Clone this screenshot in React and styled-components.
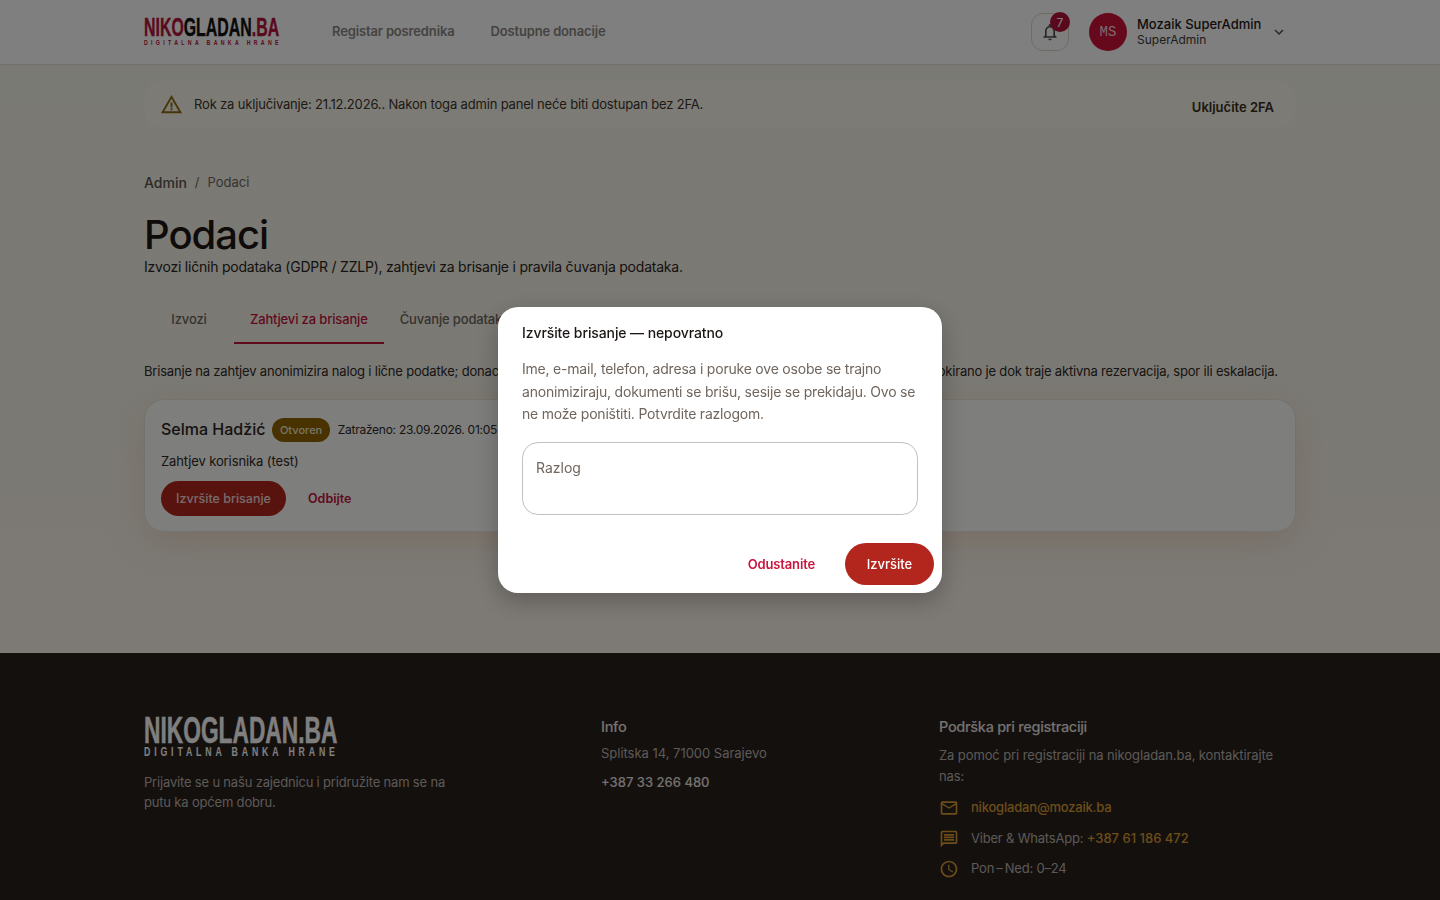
import React from "react";
import styled, { createGlobalStyle } from "styled-components";
import {
  MdOutlineNotifications,
  MdKeyboardArrowDown,
  MdWarningAmber,
  MdOutlineEmail,
  MdOutlineMessage,
  MdAccessTime,
} from "react-icons/md";

const BODY_FONT = `"Inter", "Liberation Sans", sans-serif`;

const GlobalStyle = createGlobalStyle`
  html, body {
    margin: 0;
    padding: 0;
    overflow: hidden;
    height: 900px;
  }
  * { box-sizing: border-box; }
  body {
    font-family: ${BODY_FONT};
    background: #f5f4ea;
    color: #1f1a17;
  }
`;

const Page = styled.div`
  width: 1440px;
  height: 900px;
  overflow: hidden;
  background: linear-gradient(180deg, #f5f4e8 0%, #f6f3e9 45%, #fbf4ec 72%);
`;

const Container = styled.div`
  width: 1152px;
  margin: 0 auto;
`;

const Header = styled.header`
  height: 65px;
  background: #fff;
  border-bottom: 1px solid #e9e2d4;
`;

const HeaderRow = styled(Container)`
  height: 64px;
  display: flex;
  align-items: center;
`;

const LogoBox = styled.div`
  flex: none;
  width: ${(p) => p.$width}px;
  height: ${(p) => p.$height}px;
  line-height: 1;
`;

const LogoMain = styled.div`
  display: block;
  white-space: nowrap;
  font-family: "Liberation Sans Narrow", "Liberation Sans", sans-serif;
  font-weight: 700;
  font-size: ${(p) => p.$size}px;
  line-height: ${(p) => p.$size * 0.8}px;
  -webkit-text-stroke-width: 0.4px;
  transform: scaleX(${(p) => p.$scale});
  transform-origin: left top;
  color: ${(p) => p.$color};
`;

const LogoSub = styled.div`
  margin-top: ${(p) => p.$gap || 0}px;
  white-space: nowrap;
  font-family: "Liberation Sans", sans-serif;
  font-weight: 700;
  font-size: ${(p) => p.$size}px;
  letter-spacing: ${(p) => p.$spacing}px;
  line-height: ${(p) => p.$size + 1}px;
  transform: scaleX(0.7);
  transform-origin: left top;
  color: ${(p) => p.$color};
`;

const Red = styled.span`
  color: #b5123a;
`;

const Nav = styled.nav`
  display: flex;
  gap: 36px;
  margin-left: 53px;
  margin-top: -2px;
`;

const NavLink = styled.a`
  font-size: 13px;
  font-weight: 600;
  letter-spacing: -0.15px;
  color: #8a8683;
`;

const HeaderRight = styled.div`
  margin-left: auto;
  display: flex;
  align-items: center;
`;

const BellButton = styled.div`
  position: relative;
  width: 38px;
  height: 38px;
  border: 1px solid #ddd6c9;
  border-radius: 12px;
  display: flex;
  align-items: center;
  justify-content: center;
  color: #55504c;
  font-size: 20px;
`;

const BellBadge = styled.span`
  position: absolute;
  top: -2px;
  right: -2px;
  width: 20px;
  height: 20px;
  border-radius: 50%;
  background: #b5123a;
  color: #fff;
  font-size: 12px;
  display: flex;
  align-items: center;
  justify-content: center;
`;

const Avatar = styled.div`
  width: 38px;
  height: 38px;
  border-radius: 50%;
  margin-left: 20px;
  background: #cf1238;
  color: #f2d9dd;
  font-family: "Liberation Mono", monospace;
  font-size: 14px;
  display: flex;
  align-items: center;
  justify-content: center;
`;

const UserText = styled.div`
  margin-left: 10px;
  margin-top: -2px;
  width: 133px;
`;

const UserName = styled.div`
  font-size: 13px;
  font-weight: 500;
  line-height: 16px;
  color: #1f1a17;
`;

const UserRole = styled.div`
  font-size: 12px;
  line-height: 15px;
  color: #3c3734;
`;

const Chevron = styled.div`
  display: flex;
  font-size: 18px;
  color: #55504c;
  margin-right: 8px;
`;

const Banner = styled.div`
  height: 48px;
  margin-top: 15px;
  padding: 0 22px 0 16px;
  display: flex;
  align-items: center;
  border-radius: 20px;
  background: #f9f7ec;
  font-size: 13px;
  color: #3d352a;
`;

const WarnIcon = styled.span`
  display: flex;
  font-size: 23px;
  color: #8f6a14;
  margin-right: 11px;
`;

const BannerAction = styled.span`
  margin-left: auto;
  margin-top: 6px;
  font-weight: 600;
  color: #3a2f1c;
`;

const BannerText = styled.span`
  margin-top: -1px;
  letter-spacing: -0.17px;
`;

const Main = styled.main`
  height: 573px;
`;

const Crumbs = styled.div`
  margin-top: 45px;
  height: 18px;
  display: flex;
  align-items: center;
  gap: 8px;
  font-size: 13px;
  color: #6d6862;
`;

const CrumbRoot = styled.span`
  font-size: 14px;
  font-weight: 500;
  color: #5a5550;
`;

const Title = styled.h1`
  margin: 21px 0 0;
  font-size: 40px;
  line-height: 45px;
  font-weight: 500;
  letter-spacing: -1px;
  color: #1c1714;
`;

const Subtitle = styled.p`
  margin: 0;
  font-size: 14px;
  line-height: 20px;
  letter-spacing: -0.22px;
  color: #2a2522;
`;

const Tabs = styled.div`
  margin-top: 18px;
  display: flex;
  height: 49px;
`;

const Tab = styled.div`
  min-width: 90px;
  padding: 0 16px;
  display: flex;
  align-items: center;
  justify-content: center;
  white-space: nowrap;
  font-size: 13px;
  font-weight: 500;
  letter-spacing: -0.15px;
  color: ${(p) => (p.$active ? "#c2143c" : "#6c6660")};
  border-bottom: 2px solid ${(p) => (p.$active ? "#c2143c" : "transparent")};
`;

const Note = styled.p`
  margin: 17px 0 0;
  font-size: 13px;
  line-height: 20px;
  letter-spacing: -0.19px;
  white-space: nowrap;
  color: #2f2a27;
`;

const Card = styled.section`
  margin-top: 18px;
  height: 133px;
  padding: 17px 16px;
  background: #fdfcf8;
  border: 1px solid #ebe4da;
  border-radius: 20px;
  box-shadow: 0 10px 36px rgba(214, 140, 90, 0.22);
`;

const CardTop = styled.div`
  display: flex;
  align-items: center;
  height: 24px;
`;

const CardName = styled.span`
  font-size: 16px;
  font-weight: 500;
  color: #2a2522;
`;

const StatusBadge = styled.span`
  margin: 2px 0 0 7px;
  height: 24px;
  padding: 0 7.5px;
  border-radius: 12px;
  background: #8f6500;
  color: #f2ead0;
  font-size: 11px;
  font-weight: 500;
  display: flex;
  align-items: center;
`;

const Requested = styled.span`
  margin-left: 8px;
  font-size: 12px;
  letter-spacing: -0.26px;
  color: #2f2a27;
`;

const Reason = styled.div`
  margin-top: 11px;
  font-size: 13px;
  line-height: 18px;
  letter-spacing: -0.1px;
  color: #2f2a27;
`;

const CardActions = styled.div`
  margin-top: 11px;
  display: flex;
  align-items: center;
  gap: 22px;
`;

const DangerButton = styled.button`
  border: 0;
  font-family: ${BODY_FONT};
  background: #b3261e;
  color: ${(p) => (p.$large ? "#fff" : "#ecd9d6")};
  font-size: ${(p) => (p.$large ? 13 : 12.5)}px;
  font-weight: 500;
  height: ${(p) => (p.$large ? 42 : 35)}px;
  padding: 0 14px;
  width: ${(p) => (p.$large ? "89px" : "125px")};
  border-radius: 21px;
`;

const TextButton = styled.span`
  font-size: 12.5px;
  font-weight: 600;
  color: #c2143c;
`;

const Footer = styled.footer`
  height: 400px;
  background: #29211c;
  padding-top: 64px;
`;

const FooterGrid = styled(Container)`
  display: grid;
  grid-template-columns: 409px 290px 357px;
  column-gap: 48px;
`;

const FooterText = styled.p`
  margin: ${(p) => p.$top || 0}px 0 0;
  font-size: 13px;
  line-height: ${(p) => p.$lh || 20}px;
  letter-spacing: ${(p) => p.$spacing ?? -0.1}px;
  color: #b9b3ae;
  max-width: ${(p) => p.$max || "none"};
`;

const FooterHeading = styled.h3`
  margin: 0;
  height: 20px;
  font-size: 14.5px;
  line-height: 20px;
  font-weight: 500;
  letter-spacing: -0.3px;
  color: #e8e4e0;
`;

const FooterPhone = styled.div`
  margin-top: 11px;
  font-size: 13px;
  font-weight: 500;
  color: #e8e4e0;
`;

const ContactRow = styled.div`
  margin-top: ${(p) => p.$top}px;
  display: flex;
  align-items: center;
  height: 20px;
  font-size: 13px;
  letter-spacing: -0.2px;
  color: #b9b3ae;
`;

const ContactIcon = styled.span`
  display: flex;
  width: 32px;
  font-size: 20px;
  margin-top: 2px;
  color: #d89a35;
`;

const Gold = styled.span`
  color: #d89a35;
  font-weight: 500;
  letter-spacing: ${(p) => (p.$wide ? 0 : -0.2)}px;
`;

const Backdrop = styled.div`
  position: fixed;
  inset: 0;
  background: rgba(0, 0, 0, 0.5);
  display: flex;
  align-items: center;
  justify-content: center;
`;

const Modal = styled.div`
  width: 444px;
  height: 286px;
  background: #fff;
  border-radius: 20px;
  padding: 16px 8px 8px 24px;
  box-shadow: 0 8px 24px rgba(0, 0, 0, 0.25);
`;

const ModalTitle = styled.h2`
  margin: 0;
  font-size: 14px;
  line-height: 20px;
  font-weight: 500;
  letter-spacing: -0.1px;
  color: #1c1714;
`;

const ModalBody = styled.p`
  margin: 15px 0 0;
  width: 396px;
  font-size: 14px;
  line-height: 22.5px;
  letter-spacing: -0.21px;
  color: #70665e;
`;

const ReasonField = styled.div`
  margin-top: 16px;
  width: 396px;
  height: 73px;
  border: 1px solid #c4c2c0;
  border-radius: 16px;
  padding: 15px 13px;
  font-size: 14px;
  line-height: 20px;
  color: #70665e;
`;

const ModalActions = styled.div`
  margin-top: 28px;
  display: flex;
  align-items: center;
  justify-content: flex-end;
  gap: 30px;
`;

const CancelButton = styled.span`
  font-size: 13px;
  font-weight: 600;
  letter-spacing: -0.15px;
  color: #c8163e;
`;

function Logo({ dark }) {
  if (dark) {
    return (
      <LogoBox $width={193} $height={42}>
        <LogoMain $size={36} $scale={0.632} $color="#fff">
          NIKOGLADAN.BA
        </LogoMain>
        <LogoSub $size={12.5} $spacing={5.5} $color="#fff">
          DIGITALNA BANKA HRANE
        </LogoSub>
      </LogoBox>
    );
  }
  return (
    <LogoBox $width={135} $height={30}>
      <LogoMain $size={26.5} $scale={0.6} $color="#111">
        <Red>NIKO</Red>GLADAN<Red>.BA</Red>
      </LogoMain>
      <LogoSub $size={7.5} $spacing={4.73} $gap={1} $color="#b5123a">
        DIGITALNA BANKA HRANE
      </LogoSub>
    </LogoBox>
  );
}

export default function App() {
  return (
    <Page>
      <GlobalStyle />
      <Header>
        <HeaderRow>
          <Logo />
          <Nav>
            <NavLink>Registar posrednika</NavLink>
            <NavLink>Dostupne donacije</NavLink>
          </Nav>
          <HeaderRight>
            <BellButton>
              <MdOutlineNotifications />
              <BellBadge>7</BellBadge>
            </BellButton>
            <Avatar>MS</Avatar>
            <UserText>
              <UserName>Mozaik SuperAdmin</UserName>
              <UserRole>SuperAdmin</UserRole>
            </UserText>
            <Chevron>
              <MdKeyboardArrowDown />
            </Chevron>
          </HeaderRight>
        </HeaderRow>
      </Header>

      <Main>
        <Container>
          <Banner>
            <WarnIcon>
              <MdWarningAmber />
            </WarnIcon>
            <BannerText>
              Rok za uključivanje: 21.12.2026.. Nakon toga admin panel neće biti dostupan bez 2FA.
            </BannerText>
            <BannerAction>Uključite 2FA</BannerAction>
          </Banner>

          <Crumbs>
            <CrumbRoot>Admin</CrumbRoot>
            <span>/</span>
            <span>Podaci</span>
          </Crumbs>

          <Title>Podaci</Title>
          <Subtitle>
            Izvozi ličnih podataka (GDPR / ZZLP), zahtjevi za brisanje i pravila čuvanja podataka.
          </Subtitle>

          <Tabs>
            <Tab>Izvozi</Tab>
            <Tab $active>Zahtjevi za brisanje</Tab>
            <Tab>Čuvanje podataka</Tab>
          </Tabs>

          <Note>
            Brisanje na zahtjev anonimizira nalog i lične podatke; donacije i svi finansijski zapisi se zadržavaju radi zakonskih obaveza. Brisanje blokirano je dok traje aktivna rezervacija, spor ili eskalacija.
          </Note>

          <Card>
            <CardTop>
              <CardName>Selma Hadžić</CardName>
              <StatusBadge>Otvoren</StatusBadge>
              <Requested>Zatraženo: 23.09.2026. 01:05</Requested>
            </CardTop>
            <Reason>Zahtjev korisnika (test)</Reason>
            <CardActions>
              <DangerButton>Izvršite brisanje</DangerButton>
              <TextButton>Odbijte</TextButton>
            </CardActions>
          </Card>
        </Container>
      </Main>

      <Footer>
        <FooterGrid>
          <div>
            <Logo dark />
            <FooterText $top={13} $max="310px" $spacing={-0.18}>
              Prijavite se u našu zajednicu i pridružite nam se na putu ka općem dobru.
            </FooterText>
          </div>
          <div>
            <FooterHeading>Info</FooterHeading>
            <FooterText $top={6} $spacing={-0.02}>
              Splitska 14, 71000 Sarajevo
            </FooterText>
            <FooterPhone>+387 33 266 480</FooterPhone>
          </div>
          <div>
            <FooterHeading>Podrška pri registraciji</FooterHeading>
            <FooterText $top={8} $lh={21}>
              Za pomoć pri registraciji na nikogladan.ba, kontaktirajte nas:
            </FooterText>
            <ContactRow $top={10}>
              <ContactIcon>
                <MdOutlineEmail />
              </ContactIcon>
              <Gold>nikogladan@mozaik.ba</Gold>
            </ContactRow>
            <ContactRow $top={11}>
              <ContactIcon>
                <MdOutlineMessage />
              </ContactIcon>
              <span>
                Viber &amp; WhatsApp: <Gold $wide>+387 61 186 472</Gold>
              </span>
            </ContactRow>
            <ContactRow $top={10}>
              <ContactIcon>
                <MdAccessTime />
              </ContactIcon>
              <span>Pon{"\u2009"}–{"\u2009"}Ned: 0–24</span>
            </ContactRow>
          </div>
        </FooterGrid>
      </Footer>

      <Backdrop>
        <Modal>
          <ModalTitle>Izvršite brisanje — nepovratno</ModalTitle>
          <ModalBody>
            Ime, e-mail, telefon, adresa i poruke ove osobe se trajno anonimiziraju, dokumenti se brišu, sesije se prekidaju. Ovo se ne može poništiti. Potvrdite razlogom.
          </ModalBody>
          <ReasonField>Razlog</ReasonField>
          <ModalActions>
            <CancelButton>Odustanite</CancelButton>
            <DangerButton $large>Izvršite</DangerButton>
          </ModalActions>
        </Modal>
      </Backdrop>
    </Page>
  );
}
